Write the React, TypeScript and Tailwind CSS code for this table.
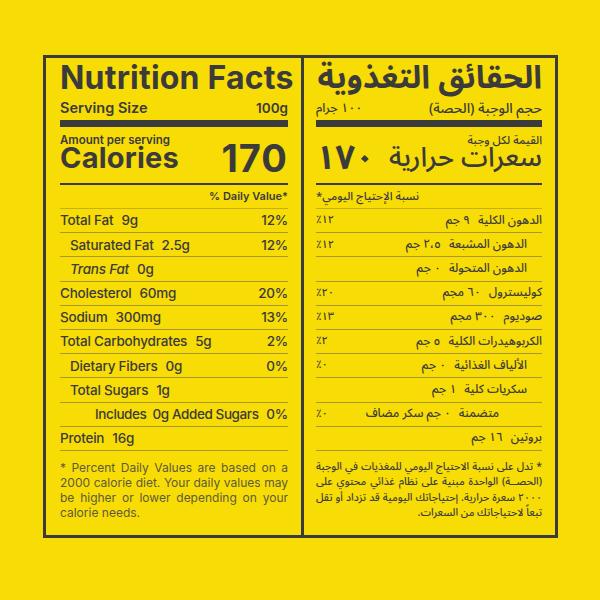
type Row = {
  label: string;
  amount: string;
  pct?: string;
  indent?: 0 | 1 | 2;
  italic?: boolean;
};

const rowsEn: Row[] = [
  { label: "Total Fat", amount: "9g", pct: "12%" },
  { label: "Saturated Fat", amount: "2.5g", pct: "12%", indent: 1 },
  { label: "Trans Fat", amount: "0g", indent: 1, italic: true },
  { label: "Cholesterol", amount: "60mg", pct: "20%" },
  { label: "Sodium", amount: "300mg", pct: "13%" },
  { label: "Total Carbohydrates", amount: "5g", pct: "2%" },
  { label: "Dietary Fibers", amount: "0g", pct: "0%", indent: 1 },
  { label: "Total Sugars", amount: "1g", indent: 1 },
  { label: "Includes", amount: "0g Added Sugars", pct: "0%", indent: 2 },
  { label: "Protein", amount: "16g" },
];

const rowsAr: Row[] = [
  { label: "الدهون الكلية", amount: "٩ جم", pct: "٪١٢" },
  { label: "الدهون المشبعة", amount: "٢،٥ جم", pct: "٪١٢", indent: 1 },
  { label: "الدهون المتحولة", amount: "٠ جم", indent: 1 },
  { label: "كوليسترول", amount: "٦٠ مجم", pct: "٪٢٠" },
  { label: "صوديوم", amount: "٣٠٠ مجم", pct: "٪١٣" },
  { label: "الكربوهيدرات الكلية", amount: "٥ جم", pct: "٪٢" },
  { label: "الألياف الغذائية", amount: "٠ جم", pct: "٪٠", indent: 1 },
  { label: "سكريات كلية", amount: "١ جم", indent: 1 },
  { label: "متضمنة", amount: "٠ جم سكر مضاف", pct: "٪٠", indent: 2 },
  { label: "بروتين", amount: "١٦ جم" },
];

const EN = "font-['Inter',sans-serif]";
const AR = "font-['Noto_Sans_Arabic','Noto_Naskh_Arabic','DejaVu_Sans',sans-serif]";

const indentEn = ["pl-0", "pl-[10px]", "pl-[35px]"];
const indentAr = ["pr-0", "pr-[15px]", "pr-[43px]"];

function RowsEn() {
  return (
    <div className="flex flex-col">
      {rowsEn.map((r) => (
        <div
          key={r.label}
          className="h-[24.2px] flex items-center justify-between border-b-[1.5px] border-[#a8982a] text-[13.5px] font-medium whitespace-nowrap tracking-[-0.2px]"
        >
          <div
            className={`flex ${r.indent === 2 ? "gap-[6px] tracking-[-0.4px]" : "gap-[8px]"} ${indentEn[r.indent ?? 0]}`}
          >
            <span className={r.italic ? "italic" : ""}>{r.label}</span>
            <span>{r.amount}</span>
          </div>
          {r.pct && <span>{r.pct}</span>}
        </div>
      ))}
    </div>
  );
}

function RowsAr() {
  return (
    <div className="flex flex-col">
      {rowsAr.map((r) => (
        <div
          key={r.label}
          className="h-[24.2px] flex items-center justify-between border-b-[1.5px] border-[#a8982a] text-[12px] font-medium whitespace-nowrap"
        >
          <div className={`flex gap-[8px] ${indentAr[r.indent ?? 0]}`}>
            <span>{r.label}</span>
            <span>{r.amount}</span>
          </div>
          {r.pct && (
            <span dir="ltr" className="text-[11px]">
              {r.pct}
            </span>
          )}
        </div>
      ))}
    </div>
  );
}

const justifyLine = "text-justify [text-align-last:justify] whitespace-nowrap";

export default function App() {
  return (
    <div className="w-[600px] h-[600px] bg-[#f8dc05] pt-[55px] pl-[43px] text-[#3b3b3b]">
      <div className="w-[515px] h-[483px] border-[3px] border-[#3b3b3b] flex">
        {/* English */}
        <div className={`w-[255px] shrink-0 pl-[14px] pr-[13px] ${EN}`}>
          <div className="h-[40px] flex items-center text-[32px] font-bold leading-none tracking-[0.2px] whitespace-nowrap">
            Nutrition Facts
          </div>
          <div className="h-[20px] flex items-center justify-between text-[14.5px] font-semibold">
            <span>Serving Size</span>
            <span className="text-[13.5px]">100g</span>
          </div>
          <div className="mt-[2px] h-[7px] bg-[#3b3b3b]" />
          <div className="mt-[8px] text-[11.5px] leading-[11px] font-semibold">Amount per serving</div>
          <div className="mt-[1px] h-[22px] flex items-center justify-between font-bold">
            <span className="text-[29px] leading-[22px] tracking-[0.2px]">Calories</span>
            <span className="text-[38px] leading-[22px] tracking-[1px]">170</span>
          </div>
          <div className="mt-[14px] h-[2px] bg-[#3b3b3b]" />
          <div className="h-[24px] flex items-center justify-end text-[11px] font-semibold border-b border-[#c4b117]">
            % Daily Value*
          </div>
          <RowsEn />
          <div className="mt-[9px] text-[12px] leading-[15px] text-[#5e5a3c]">
            <div className={justifyLine}>* Percent Daily Values are based on a</div>
            <div className={justifyLine}>2000 calorie diet. Your daily values may</div>
            <div className={justifyLine}>be higher or lower depending on your</div>
            <div>calorie needs.</div>
          </div>
        </div>

        {/* Arabic */}
        <div
          dir="rtl"
          className={`w-[251px] shrink-0 min-w-0 border-l-[3px] border-[#3b3b3b] pr-[10px] pl-[12px] ${AR}`}
        >
          <div className="h-[40px] flex items-center text-[32px] font-bold leading-none whitespace-nowrap">
            الحقائق التغذوية
          </div>
          <div className="h-[20px] flex items-center justify-between text-[14px] font-medium">
            <span>حجم الوجبة (الحصة)</span>
            <span className="text-[12.5px]">١٠٠ جرام</span>
          </div>
          <div className="mt-[2px] h-[7px] bg-[#3b3b3b]" />
          <div className="mt-[8px] text-[11.5px] leading-[11px] font-medium">القيمة لكل وجبة</div>
          <div className="mt-[1px] h-[22px] flex items-center justify-between">
            <span className="text-[27px] leading-[22px] font-medium">سعرات حرارية</span>
            <span dir="ltr" className="text-[34px] leading-[22px] font-bold tracking-[-2px]">
              ١٧٠
            </span>
          </div>
          <div className="mt-[14px] h-[2px] bg-[#3b3b3b]" />
          <div className="h-[24px] flex items-center justify-end text-[11.5px] font-medium border-b border-[#c4b117]">
            نسبة الإحتياج اليومي*
          </div>
          <RowsAr />
          <div className="mt-[9px] text-[10.5px] leading-[15.5px] font-medium">
            <div className={justifyLine}>* تدل على نسبة الاحتياج اليومي للمغذيات في الوجبة</div>
            <div className={justifyLine}>(الحصــة)  الواحدة مبنية على نظام غذائي محتوي على</div>
            <div className={justifyLine}>٢٠٠٠ سعرة حرارية. إحتياجاتك اليومية قد تزداد أو تقل</div>
            <div>تبعاً لاحتياجاتك من السعرات.</div>
          </div>
        </div>
      </div>
    </div>
  );
}
